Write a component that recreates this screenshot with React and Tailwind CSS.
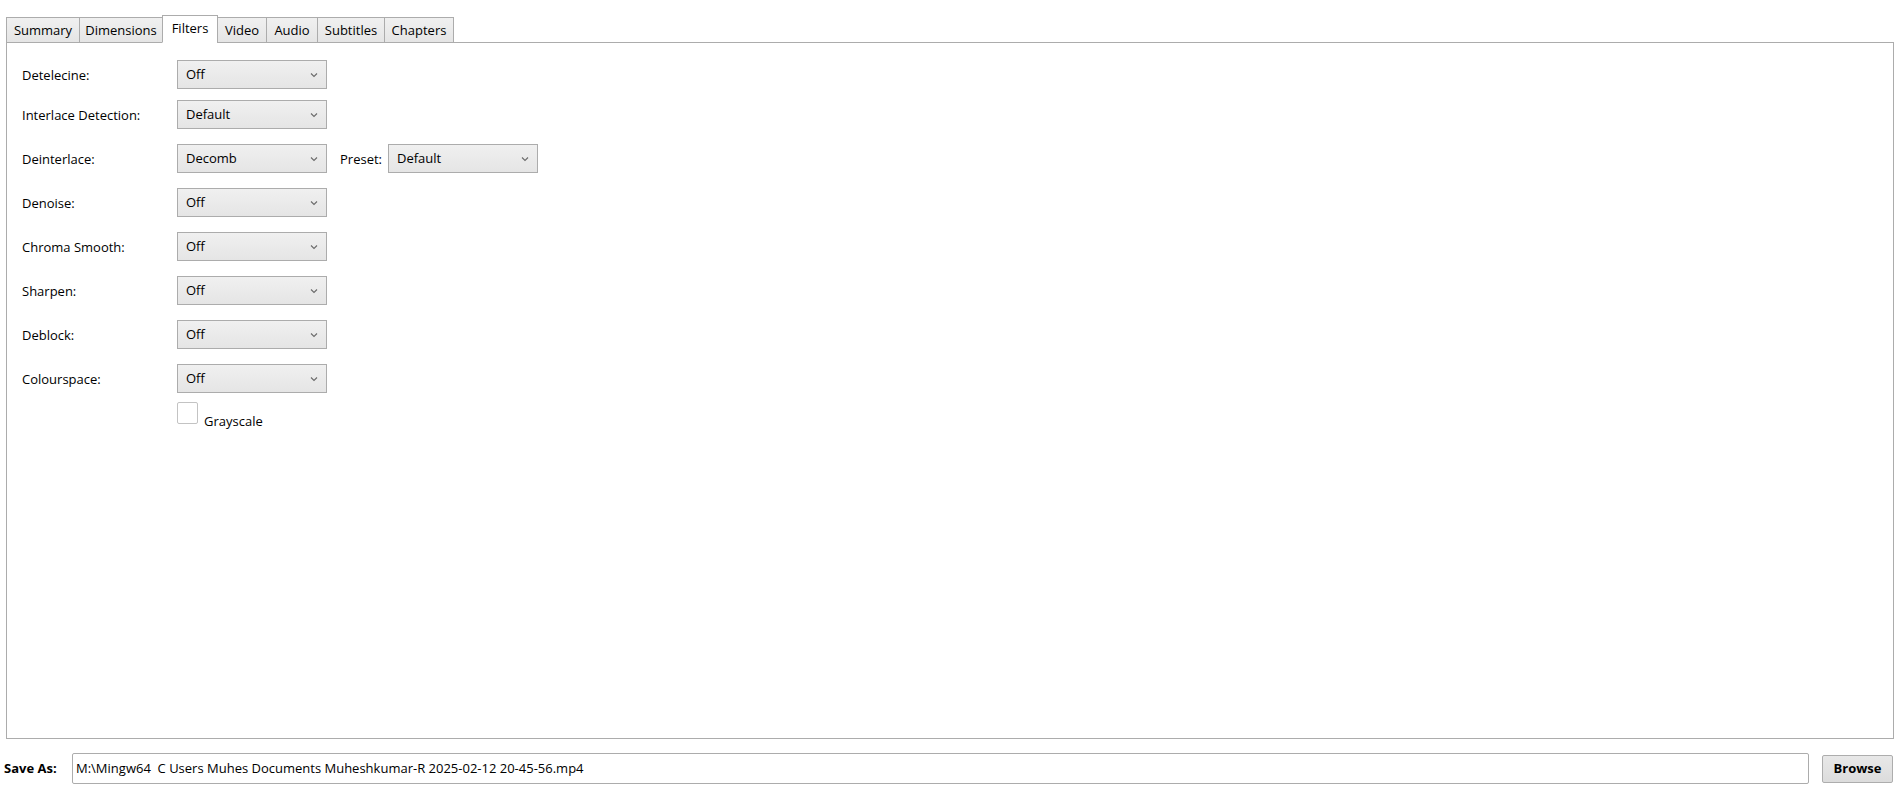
import React, { useState } from 'react';

const TABS = [
  { name: 'Summary', w: 'w-[74px]' },
  { name: 'Dimensions', w: 'w-[84px]' },
  { name: 'Filters', w: 'w-[56px]' },
  { name: 'Video', w: 'w-[50px]' },
  { name: 'Audio', w: 'w-[52px]' },
  { name: 'Subtitles', w: 'w-[68px]' },
  { name: 'Chapters', w: 'w-[70px]' },
];

function Chevron() {
  return (
    <svg width="8" height="6" viewBox="0 0 8 6" className="shrink-0">
      <path d="M1 1.5 L4 4.5 L7 1.5" fill="none" stroke="#6b6b6b" strokeWidth="1.1" />
    </svg>
  );
}

function Dropdown({ value }) {
  return (
    <div className="w-[150px] h-[29px] flex items-center justify-between pl-[8px] pr-[8px] border border-[#acacac] bg-gradient-to-b from-[#f0f0f0] to-[#e5e5e5] text-[13px]">
      <span>{value}</span>
      <Chevron />
    </div>
  );
}

function Row({ label, value, mt, children }) {
  return (
    <div className={`flex items-center ${mt}`}>
      <div className="w-[155px] text-[13px] pt-[2px]">{label}</div>
      <Dropdown value={value} />
      {children}
    </div>
  );
}

export default function App() {
  const [active, setActive] = useState('Filters');
  const [gray, setGray] = useState(false);

  return (
    <div className="w-[1898px] h-[800px] bg-white text-black font-['Open_Sans','Noto_Sans',sans-serif] overflow-hidden">
      <div className="pl-[6px] pr-[4px] pt-[15px]">
        {/* tab strip */}
        <div className="flex items-end h-[28px] relative z-10 -mb-px">
          {TABS.map((t) => {
            const sel = t.name === active;
            return (
              <button
                key={t.name}
                onClick={() => setActive(t.name)}
                className={
                  sel
                    ? `${t.w} h-[28px] -ml-px first:ml-0 border border-[#acacac] border-b-white bg-white text-[13px] leading-none flex items-center justify-center pb-[2px]`
                    : `${t.w} h-[26px] -ml-px first:ml-0 border border-[#acacac] bg-gradient-to-b from-[#f0f0f0] to-[#e5e5e5] text-[13px] leading-none flex items-center justify-center`
                }
              >
                {t.name}
              </button>
            );
          })}
        </div>

        {/* content panel */}
        <div className="h-[697px] border border-[#acacac] pl-[15px] pt-[17px]">
          <Row label="Detelecine:" value="Off" mt="mt-0" />
          <Row label="Interlace Detection:" value="Default" mt="mt-[11px]" />
          <Row label="Deinterlace:" value="Decomb" mt="mt-[15px]">
            <span className="ml-[13px] mr-[6px] text-[13px] pt-[2px]">Preset:</span>
            <Dropdown value="Default" />
          </Row>
          <Row label="Denoise:" value="Off" mt="mt-[15px]" />
          <Row label="Chroma Smooth:" value="Off" mt="mt-[15px]" />
          <Row label="Sharpen:" value="Off" mt="mt-[15px]" />
          <Row label="Deblock:" value="Off" mt="mt-[15px]" />
          <Row label="Colourspace:" value="Off" mt="mt-[15px]" />
          <div className="flex items-end mt-[9px] pl-[155px]">
            <button
              onClick={() => setGray(!gray)}
              className="w-[21px] h-[22px] border border-[#c3c3c3] rounded-[2px] bg-white flex items-center justify-center text-[12px]"
            >
              {gray ? '✓' : ''}
            </button>
            <span className="ml-[6px] text-[13px] leading-none -mb-[4px]">Grayscale</span>
          </div>
        </div>
      </div>

      {/* save row */}
      <div className="flex items-center mt-[14px] pl-[4px] pr-[5px]">
        <span className="w-[68px] text-[13px] font-bold">Save As:</span>
        <div className="flex-1 h-[31px] border border-[#acacac] rounded-[2px] flex items-center pl-[3px] text-[13px] whitespace-pre">
          M:\Mingw64  C Users Muhes Documents Muheshkumar-R 2025-02-12 20-45-56.mp4
        </div>
        <button className="ml-[13px] w-[71px] h-[28px] border border-[#adadad] rounded-[2px] bg-gradient-to-b from-[#e8e8e8] to-[#dcdcdc] text-[13px] font-bold">
          Browse
        </button>
      </div>
    </div>
  );
}
